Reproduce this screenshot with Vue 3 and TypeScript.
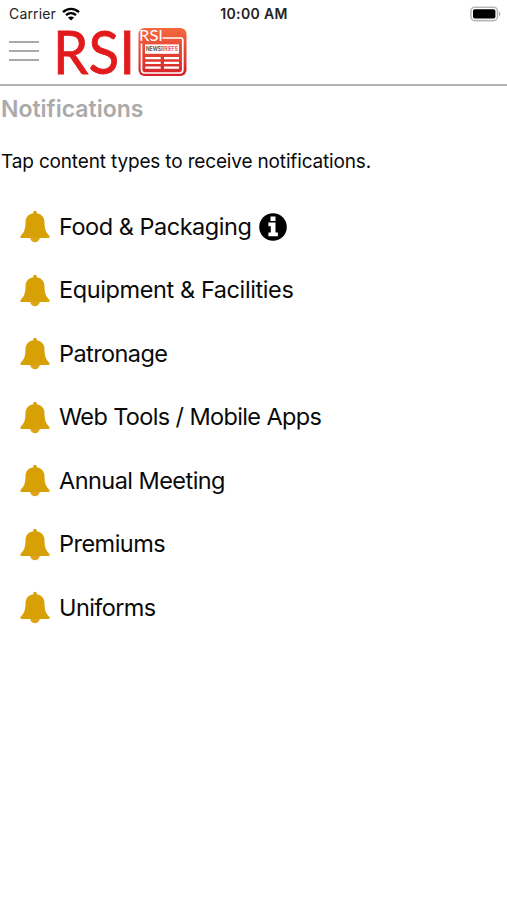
<script setup lang="ts">
interface ContentType {
  label: string
  spacing: number
  info?: boolean
}

const contentTypes: ContentType[] = [
  { label: 'Food & Packaging', spacing: -0.48, info: true },
  { label: 'Equipment & Facilities', spacing: -0.4 },
  { label: 'Patronage', spacing: -0.58 },
  { label: 'Web Tools / Mobile Apps', spacing: -0.63 },
  { label: 'Annual Meeting', spacing: -0.55 },
  { label: 'Premiums', spacing: -0.53 },
  { label: 'Uniforms', spacing: -0.6 },
]
</script>

<template>
  <div class="screen">
    <div class="status">
      <div class="carrier">
        <span>Carrier</span>
        <svg class="wifi" width="18" height="14" viewBox="0 0 18 14" fill="none" stroke="#000" stroke-width="2.4">
          <path d="M1 5.2C5.6.7 12.4.7 17 5.2" />
          <path d="M4 8.2c3-2.8 7-2.8 10 0" />
          <path d="M9 13.6 5.9 10.5c1.8-1.5 4.4-1.5 6.2 0z" fill="#000" stroke="none" />
        </svg>
      </div>
      <div class="time">10:00 AM</div>
      <div class="power">
        <svg width="31" height="16" viewBox="0 0 31 16">
          <rect x=".9" y="1.2" width="26.6" height="13.4" rx="4" fill="#fff" stroke="#b9b9b9" stroke-width="1.6" />
          <rect x="3" y="3.2" width="22.4" height="9.4" rx="1.8" fill="#000" />
          <path d="M29 5.6c1.8.8 1.8 3.8 0 4.6z" fill="#a8a8a8" />
        </svg>
      </div>
    </div>

    <header class="header">
      <button class="menu" aria-label="Menu"><i /><i /><i /></button>
      <svg class="wordmark" width="78" height="54" viewBox="0 0 78 54">
        <text x="-4" y="46.500" textLength="82" lengthAdjust="spacingAndGlyphs">RSI</text>
      </svg>
      <svg class="badge" width="50" height="50" viewBox="0 0 50 50">
        <defs>
          <linearGradient id="badge-fill" x1="0" y1="0" x2="0" y2="1">
            <stop offset="0" stop-color="#f5693f" />
            <stop offset="1" stop-color="#d5222b" />
          </linearGradient>
        </defs>
        <rect x=".5" y="1" width="48" height="48" rx="6" fill="url(#badge-fill)" />
        <path d="M24.500 11h18.500q1.800 0 1.800 1.800v30q0 3.200-3.200 3.200H6.700q-3.200 0-3.200-3.200V16.500" fill="none" stroke="#fff" stroke-width="1.700" />
        <rect x="7" y="17.400" width="34" height="9.400" fill="#fff" />
        <path d="M7.300 31.200h15.400M26 31.200h15M7.300 35.800h15.400M26 35.800h15M7.300 40.600h15.400M26 40.600h15" stroke="#fff" stroke-width="2.200" />
        <text class="badge-title" x="1" y="14" textLength="24" lengthAdjust="spacingAndGlyphs">RSI</text>
        <text class="badge-news" x="8" y="24.200" textLength="32" lengthAdjust="spacingAndGlyphs">NEWS<tspan fill="#e8474a">BRIEFS</tspan></text>
      </svg>
    </header>

    <main>
      <h1>Notifications</h1>
      <p>Tap content types to receive notifications.</p>
      <ul>
        <li v-for="item in contentTypes" :key="item.label">
          <svg class="bell" width="30" height="33" viewBox="0 0 30 33">
            <path d="M10.1 27.8h9.8c-.6 3-2.400 4.400-4.900 4.400s-4.300-1.400-4.900-4.400z" fill="#dda51b" />
            <path d="M15 .8c1.100 0 1.700.7 1.700 1.700v.7c5 .7 7.800 4.200 7.800 9 0 6.300 1.400 10.300 4.600 13.200 1 1.300.4 2.600-1 2.600H1.900c-1.400 0-2-1.300-1-2.600 3.200-2.900 4.600-6.900 4.600-13.200 0-4.800 2.800-8.300 7.800-9v-.7c0-1 .6-1.700 1.700-1.700z" fill="#d7a106" />
          </svg>
          <span class="label" :style="{ letterSpacing: item.spacing + 'px' }">{{ item.label }}</span>
          <svg v-if="item.info" class="info" width="28" height="28" viewBox="0 0 28 28">
            <circle cx="14" cy="14" r="13.8" fill="#000" />
            <path d="M11.500 3.500h5v4.400h-5zM9.400 9.600h7.100v10h2.400v3.600H9.400v-3.600h2.400v-6.400H9.400z" fill="#fff" />
          </svg>
        </li>
      </ul>
    </main>
  </div>
</template>

<style>
body {
  margin: 0;
  background: #fff;
}
</style>

<style scoped>
.screen {
  width: 507px;
  height: 900px;
  overflow: hidden;
  background: #fff;
  color: #0a0a0a;
  font-family: Inter, 'Liberation Sans', sans-serif;
}
.status {
  display: grid;
  grid-template-columns: 1fr auto 1fr;
  align-items: center;
  box-sizing: border-box;
  height: 27px;
  padding: 0 6px 0 7px;
  font-size: 14px;
}
.carrier {
  display: flex;
  align-items: center;
  gap: 6px;
  padding-left: 2px;
  letter-spacing: 0.15px;
  color: #222;
}
.time {
  font-size: 14px;
  font-weight: 600;
  letter-spacing: 0.35px;
  color: #222;
}
.power {
  display: flex;
  justify-content: flex-end;
}
.header {
  display: flex;
  box-sizing: border-box;
  height: 59px;
  padding-left: 9px;
  border-bottom: 2px solid #b4b4b4;
}
.menu {
  display: flex;
  flex-direction: column;
  gap: 7px;
  width: 30px;
  margin: 14px 18px 0 0;
  padding: 0;
  border: 0;
  background: none;
}
.menu i {
  display: block;
  width: 30px;
  height: 2px;
  background: #aaa;
}
.wordmark {
  overflow: visible;
  font-family: Lato, sans-serif;
  font-size: 60px;
  fill: #e21a1c;
  stroke: #e21a1c;
  stroke-width: 0.8px;
}
.badge {
  margin-left: 2.5px;
  overflow: visible;
}
.badge-title {
  font: 16px Lato, sans-serif;
  fill: #fff;
}
.badge-news {
  font: 600 5.8px Inter, sans-serif;
  fill: #444;
}
h1 {
  margin: 0;
  padding: 8.5px 0 0 1px;
  font-size: 23px;
  line-height: 28px;
  font-weight: 600;
  letter-spacing: 0;
  color: #aaa;
}
p {
  margin: 27.5px 0 0;
  padding-left: 1px;
  font-size: 19px;
  line-height: 24px;
  letter-spacing: -0.16px;
}
ul {
  margin: 21px 0 0;
  padding: 0 0 0 20px;
  list-style: none;
}
li {
  display: flex;
  align-items: center;
  height: 63.5px;
}
.bell {
  flex: none;
  margin-right: 9px;
}
.label {
  font-size: 23.5px;
  line-height: 30px;
  white-space: nowrap;
}
.info {
  margin-left: 8px;
}
</style>
